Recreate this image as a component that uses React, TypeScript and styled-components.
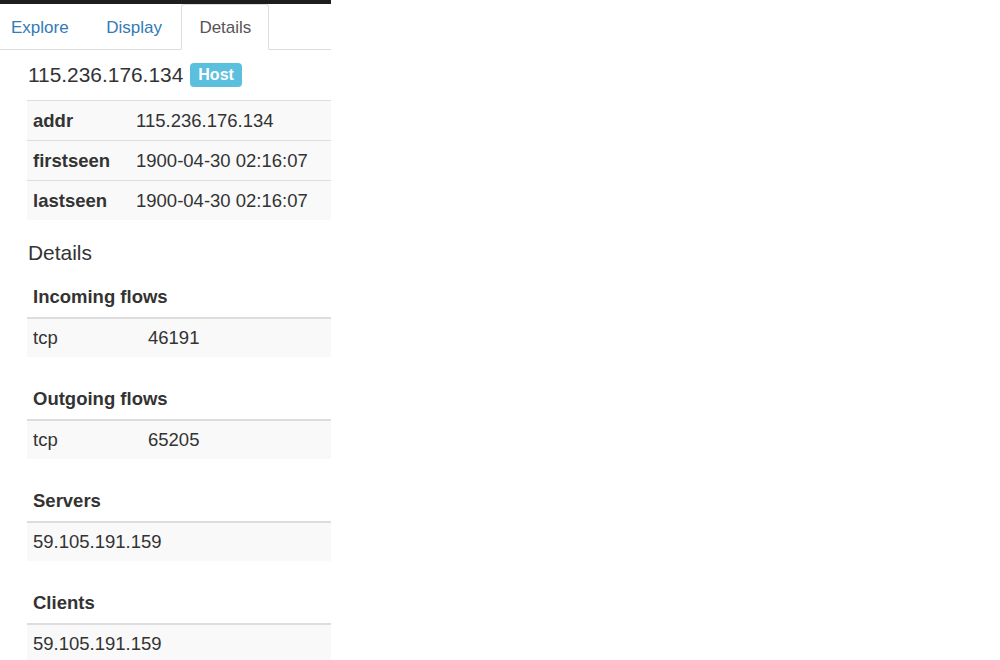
import React from 'react';
import styled, {createGlobalStyle} from "styled-components";

const GlobalStyle = createGlobalStyle`
  html, body {
    margin: 0;
    padding: 0;
    background: #fff;
  }
  body {
    font-family: "Liberation Sans", Arial, sans-serif;
    color: #333;
  }
`

interface Section {
    title: string;
    rows: string[][];
}

const props = [
    ["addr", "115.236.176.134"],
    ["firstseen", "1900-04-30 02:16:07"],
    ["lastseen", "1900-04-30 02:16:07"],
]

const sections: Section[] = [
    {title: "Incoming flows", rows: [["tcp", "46191"]]},
    {title: "Outgoing flows", rows: [["tcp", "65205"]]},
    {title: "Servers", rows: [["59.105.191.159"]]},
    {title: "Clients", rows: [["59.105.191.159"]]},
]

const tabs = ["Explore", "Display", "Details"]

export default function App() {
    return (
        <>
            <GlobalStyle/>
            <Panel>
                <TopBar/>
                <Tabs>
                    {tabs.map(t =>
                        <Tab key={t} $active={t === "Details"}>{t}</Tab>
                    )}
                </Tabs>
                <Content>
                    <Title>
                        <TitleText>115.236.176.134</TitleText>
                        <Badge>Host</Badge>
                    </Title>
                    <PropTable>
                        <tbody>
                        {props.map(([k, v]) =>
                            <PropRow key={k}>
                                <PropKey>{k}</PropKey>
                                <PropValue>{v}</PropValue>
                            </PropRow>
                        )}
                        </tbody>
                    </PropTable>
                    <Heading>Details</Heading>
                    {sections.map(s =>
                        <FlowTable key={s.title}>
                            <colgroup>
                                <KeyCol/>
                                <col/>
                            </colgroup>
                            <thead>
                            <tr>
                                <FlowHead colSpan={2}>{s.title}</FlowHead>
                            </tr>
                            </thead>
                            <tbody>
                            {s.rows.map((r, i) =>
                                <FlowRow key={i}>
                                    {r.map((c, j) =>
                                        <FlowCell key={j} colSpan={r.length === 1 ? 2 : 1}>{c}</FlowCell>
                                    )}
                                </FlowRow>
                            )}
                            </tbody>
                        </FlowTable>
                    )}
                </Content>
            </Panel>
        </>
    );
}

const Panel = styled.div`
  width: 331px;
`
const TopBar = styled.div`
  height: 4px;
  background: #1d1d1d;
`
const Tabs = styled.ul`
  display: flex;
  list-style: none;
  margin: 0;
  padding: 0;
  border-bottom: 1px solid #ddd;
  height: 46px;
  box-sizing: border-box;
`
const Tab = styled.li<{ $active?: boolean }>`
  font-size: 17px;
  line-height: 45px;
  padding: 0 17px;
  margin-right: 1.5px;
  margin-bottom: -1px;
  box-sizing: border-box;
  height: 46px;
  color: ${p => p.$active ? "#555" : "#337ab7"};
  background: ${p => p.$active ? "#fff" : "transparent"};
  border: 1px solid ${p => p.$active ? "#ddd" : "transparent"};
  border-bottom-color: ${p => p.$active ? "#fff" : "transparent"};
  border-radius: 3px 3px 0 0;

  &:first-child {
    margin-left: -7px;
  }
`
const Content = styled.div`
  padding-left: 27px;
`
const Title = styled.div`
  display: flex;
  align-items: center;
  gap: 7px;
  height: 50px;
  padding-left: 1px;
`
const TitleText = styled.span`
  font-size: 20.9px;
  color: #333;
`
const Badge = styled.span`
  background: #5bc0de;
  color: #fff;
  font-weight: bold;
  font-size: 16px;
  height: 24px;
  line-height: 24px;
  padding: 0 8px;
  border-radius: 4px;
`
const PropTable = styled.table`
  width: 100%;
  border-collapse: collapse;
  margin-bottom: 20px;
  font-size: 18.5px;
`
const PropRow = styled.tr`
  background: #f9f9f9;
  border-top: 1px solid #ddd;
`
const PropKey = styled.td`
  font-weight: bold;
  width: 97px;
  padding: 8px 6px;
  line-height: 23px;
  color: #333;
`
const PropValue = styled.td`
  padding: 8px 6px 8px 0;
  line-height: 23px;
  color: #333;
`
const Heading = styled.h4`
  font-size: 20.9px;
  font-weight: normal;
  margin: 0 0 11px 1px;
  line-height: 26px;
  color: #333;
`
const FlowTable = styled.table`
  width: 100%;
  table-layout: fixed;
  border-collapse: collapse;
  margin-bottom: 22px;
  font-size: 18.5px;
`
const KeyCol = styled.col`
  width: 115px;
`
const FlowHead = styled.th`
  text-align: left;
  font-weight: bold;
  padding: 8px 6px;
  line-height: 24px;
  border-bottom: 2px solid #ddd;
  color: #333;
`
const FlowRow = styled.tr`
  background: #f9f9f9;
`
const FlowCell = styled.td`
  padding: 7px 6px;
  line-height: 24px;
  color: #333;
`
